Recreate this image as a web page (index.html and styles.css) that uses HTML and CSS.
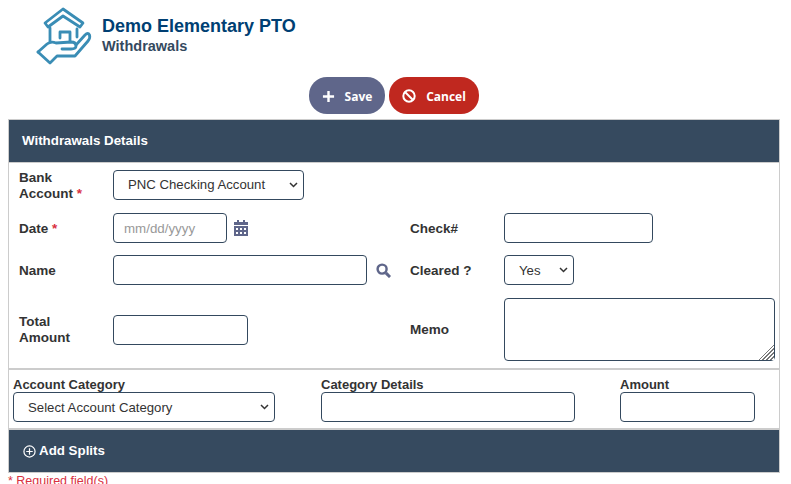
FILE: index.html
```html
<!DOCTYPE html>
<html lang="en">
<head>
    <meta charset="UTF-8">
    <title>Withdrawals</title>
    <link rel="stylesheet" href="styles.css">
</head>
<body>

    <div class="top">
        <svg class="logo" viewBox="0 0 75 70" width="75" height="70" fill="none" stroke="#3a8db5" stroke-width="2.8" stroke-linejoin="round" stroke-linecap="round">
            <path d="M38 9 L20 23 L23 27 L38 16 L55 27 L58 23 Z"/>
            <path d="M25 28 V41 M52 29 V37"/>
            <path d="M35 38 V32 H45 V41"/>
            <path d="M13 52 L22 44 Q26 41 31 43 L46 42 Q51 42 51 46 Q51 49 46 49 L37 49"/>
            <path d="M51 45 L60 35 Q63 32 64.5 35 Q65.5 38 63 41 L50 56 H32 L25 63 L13 52"/>
        </svg>
        <div>
            <div class="org">Demo Elementary PTO</div>
            <div class="sub">Withdrawals</div>
        </div>
    </div>

    <div class="buttons">
        <button class="btn save-btn" type="button">
            <svg viewBox="0 0 14 14" width="13" height="13"><path d="M7 1V13M1 7H13" stroke="#fff" stroke-width="2.6" fill="none"/></svg>
            Save
        </button>
        <button class="btn cancel-btn" type="button">
            <svg viewBox="0 0 14 14" width="14" height="14" fill="none" stroke="#fff" stroke-width="2"><circle cx="7" cy="7" r="5.7"/><path d="M3 3L11 11"/></svg>
            Cancel
        </button>
    </div>

    <div class="panel">
        <div class="bar">Withdrawals Details</div>

        <div class="fields">
            <label class="lbl">Bank Account <span class="req">*</span></label>
            <select class="bank-select wide"><option>PNC Checking Account</option></select>

            <label class="lbl">Date <span class="req">*</span></label>
            <div class="with-icon">
                <input type="text" class="date-input" placeholder="mm/dd/yyyy">
                <svg viewBox="0 0 14 16" width="14" height="16" fill="#5f668a">
                    <path d="M3 0h2v2h4V0h2v2h3v3H0V2h3zM0 6h14v10H0zM2 8v2h2V8zm4 0v2h2V8zm4 0v2h2V8zM2 12v2h2v-2zm4 0v2h2v-2zm4 0v2h2v-2z" fill-rule="evenodd"/>
                </svg>
            </div>
            <label class="lbl">Check#</label>
            <input type="text" class="check-input">

            <label class="lbl">Name</label>
            <div class="with-icon">
                <input type="text" class="name-input">
                <svg class="search-icon" viewBox="0 0 16 16" width="15" height="15" fill="none" stroke="#5f668a">
                    <circle cx="6.5" cy="6.5" r="4.8" stroke-width="2.6"/>
                    <path d="M10.5 10.5L15 15" stroke-width="3.2"/>
                </svg>
            </div>
            <label class="lbl">Cleared ?</label>
            <select class="cleared-select"><option>Yes</option></select>

            <label class="lbl">Total Amount</label>
            <input type="text" class="total-input">
            <label class="lbl">Memo</label>
            <textarea class="memo"></textarea>
        </div>

        <div class="split">
            <div class="split-col">
                <label class="split-lbl">Account Category</label>
                <select class="category-select"><option>Select Account Category</option></select>
            </div>
            <div class="split-col">
                <label class="split-lbl">Category Details</label>
                <input type="text" class="details-input">
            </div>
            <div class="split-col">
                <label class="split-lbl">Amount</label>
                <input type="text" class="amount-input">
            </div>
        </div>

        <div class="bar add-bar">
            <svg viewBox="0 0 14 14" width="13" height="13" fill="none" stroke="#fff" stroke-width="1.3"><circle cx="7" cy="7" r="6"/><path d="M7 3.5V10.5M3.5 7H10.5"/></svg>
            Add Splits
        </div>
    </div>

    <div class="note">* Required field(s)</div>

</body>
</html>
```

FILE: styles.css
```css
html, body {
    height: 100%;
    overflow: hidden;
}

body {
    font-family: "Liberation Sans", Arial, sans-serif;
    font-size: 13.5px;
    background-color: white;
    color: #333;
    margin: 0;
    padding: 0 11px 0 8px;
    box-sizing: border-box;
}

.top {
    display: flex;
    align-items: center;
    height: 70px;
    padding-left: 17px;
    gap: 2px;
}

.org {
    font-size: 18px;
    font-weight: bold;
    color: #003f73;
    line-height: 22px;
}

.sub {
    font-size: 14.5px;
    font-weight: bold;
    color: #34495e;
    line-height: 18px;
}

.buttons {
    display: flex;
    justify-content: center;
    gap: 4px;
    margin-top: 7px;
}

.btn {
    display: flex;
    align-items: center;
    justify-content: center;
    gap: 10px;
    height: 37px;
    border: none;
    border-radius: 18px;
    color: white;
    font-family: "Open Sans", sans-serif;
    font-size: 12px;
    font-weight: 700;
    padding: 1px 0 0;
}

.save-btn {
    width: 76px;
    background-color: #5f668a;
}

.cancel-btn {
    width: 90px;
    background-color: #c0281f;
}

.panel {
    margin-top: 5px;
    border: 1px solid #ccc;
}

.bar {
    background-color: #364a5f;
    color: white;
    font-size: 13.33px;
    font-weight: bold;
    height: 42px;
    line-height: 42px;
    padding-left: 13px;
}

.fields {
    display: grid;
    grid-template-columns: 94px 297px 94px 1fr;
    align-items: center;
    justify-items: start;
    row-gap: 12px;
    padding: 6px 4px 7px 10px;
    border-top: 1px solid #ccc;
    border-bottom: 2px solid #ccc;
}

.lbl {
    font-weight: bold;
    line-height: 16px;
    width: 70px;
    padding-top: 1px;
    margin-bottom: -1px;
}

.req {
    color: #d9313f;
}

input, select, textarea {
    height: 30px;
    border: 1px solid #34495e;
    border-radius: 4px;
    background-color: white;
    font-family: "Liberation Sans", Arial, sans-serif;
    font-size: 13.33px;
    color: #333;
    box-sizing: border-box;
    padding: 0 10px;
    margin: 0;
}

select {
    appearance: none;
    font-size: 13.2px;
    padding: 0 24px 0 14px;
    background-image: url("data:image/svg+xml,%3Csvg xmlns='http://www.w3.org/2000/svg' width='9' height='6'%3E%3Cpath d='M1 1l3.5 3.5L8 1' fill='none' stroke='%23333' stroke-width='1.5'/%3E%3C/svg%3E");
    background-repeat: no-repeat;
    background-position: right 5px center;
}

input::placeholder {
    color: #999;
}

.wide {
    grid-column: 2 / 5;
    margin-bottom: 1px;
}

.bank-select {
    width: 191px;
}

.with-icon {
    display: flex;
    align-items: center;
    gap: 7px;
}

.date-input {
    width: 114px;
}

.name-input {
    width: 254px;
}

.search-icon {
    margin-left: 2px;
}

.check-input {
    width: 149px;
}

.cleared-select {
    width: 70px;
}

.total-input {
    width: 135px;
    margin-top: 1px;
}

.memo {
    display: block;
    width: 271px;
    height: 63px;
    margin-top: 1px;
}

.memo::-webkit-resizer {
    background:
        linear-gradient(135deg, #fff 50%, transparent 50%),
        repeating-linear-gradient(135deg, #fff 0 1.4px, #777 1.4px 2.8px);
}

.split {
    display: flex;
    padding: 8px 0 6px 4px;
    border-bottom: 2px solid #ccc;
}

.split-col {
    display: flex;
    flex-direction: column;
}

.split-col:nth-child(1) {
    width: 308px;
}

.split-col:nth-child(2) {
    width: 299px;
}

.split-lbl {
    font-size: 13px;
    font-weight: bold;
    line-height: 14px;
}

.category-select {
    width: 262px;
}

.details-input {
    width: 254px;
}

.amount-input {
    width: 135px;
}

.add-bar {
    display: flex;
    align-items: center;
    gap: 3px;
    padding-left: 14px;
}

.note {
    color: #d9313f;
    font-size: 12.5px;
    line-height: 14px;
    padding-top: 1px;
}
```
